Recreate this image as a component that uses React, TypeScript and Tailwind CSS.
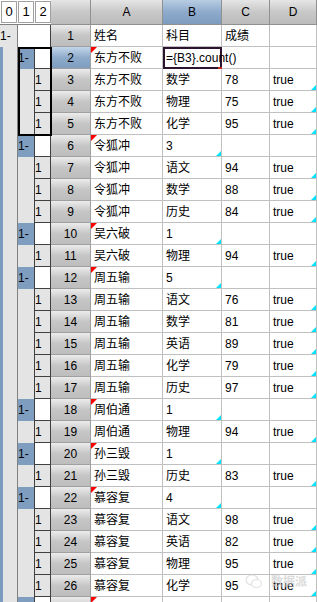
type Row = {
  n: number;
  a: string;
  b: string;
  c: string;
  d: string;
  head?: boolean;
};

const rows: Row[] = [
  { n: 1, a: '姓名', b: '科目', c: '成绩', d: '' },
  { n: 2, a: '东方不败', b: '={B3}.count()', c: '', d: '', head: true },
  { n: 3, a: '东方不败', b: '数学', c: '78', d: 'true' },
  { n: 4, a: '东方不败', b: '物理', c: '75', d: 'true' },
  { n: 5, a: '东方不败', b: '化学', c: '95', d: 'true' },
  { n: 6, a: '令狐冲', b: '3', c: '', d: '', head: true },
  { n: 7, a: '令狐冲', b: '语文', c: '94', d: 'true' },
  { n: 8, a: '令狐冲', b: '数学', c: '88', d: 'true' },
  { n: 9, a: '令狐冲', b: '历史', c: '84', d: 'true' },
  { n: 10, a: '吴六破', b: '1', c: '', d: '', head: true },
  { n: 11, a: '吴六破', b: '物理', c: '94', d: 'true' },
  { n: 12, a: '周五输', b: '5', c: '', d: '', head: true },
  { n: 13, a: '周五输', b: '语文', c: '76', d: 'true' },
  { n: 14, a: '周五输', b: '数学', c: '81', d: 'true' },
  { n: 15, a: '周五输', b: '英语', c: '89', d: 'true' },
  { n: 16, a: '周五输', b: '化学', c: '79', d: 'true' },
  { n: 17, a: '周五输', b: '历史', c: '97', d: 'true' },
  { n: 18, a: '周伯通', b: '1', c: '', d: '', head: true },
  { n: 19, a: '周伯通', b: '物理', c: '94', d: 'true' },
  { n: 20, a: '孙三毁', b: '1', c: '', d: '', head: true },
  { n: 21, a: '孙三毁', b: '历史', c: '83', d: 'true' },
  { n: 22, a: '慕容复', b: '4', c: '', d: '', head: true },
  { n: 23, a: '慕容复', b: '语文', c: '98', d: 'true' },
  { n: 24, a: '慕容复', b: '英语', c: '82', d: 'true' },
  { n: 25, a: '慕容复', b: '物理', c: '95', d: 'true' },
  { n: 26, a: '慕容复', b: '化学', c: '95', d: 'true' },
];

const font = { fontFamily: '"Liberation Sans", "Noto Sans CJK SC", sans-serif' };

const RedMark = () => (
  <div className="absolute left-0 top-0 w-0 h-0 border-t-[6px] border-t-[#ff0000] border-r-[6px] border-r-transparent" />
);

const CyanMark = () => (
  <div className="absolute right-0 bottom-0 w-0 h-0 border-b-[5px] border-b-[#00e5ff] border-l-[5px] border-l-transparent" />
);

const Cell = ({ w, children, red, cyan }: { w: string; children?: React.ReactNode; red?: boolean; cyan?: boolean }) => (
  <div className={`relative ${w} shrink-0 h-full border-r border-b border-[#c0c0c0] bg-white flex items-center pl-[3px] text-[12px] text-black whitespace-nowrap`}>
    {red && <RedMark />}
    {children}
    {cyan && <CyanMark />}
  </div>
);

export default function App() {
  return (
    <div className="relative w-[317px] h-[602px] overflow-hidden bg-white select-none" style={font}>
      {/* header */}
      <div className="flex h-[25px]">
        <div className="w-[51px] shrink-0 flex items-start gap-[1px] pl-[1px] pt-[1px] bg-white border-b border-[#808080]">
          {['0', '1', '2'].map((l) => (
            <div key={l} className="w-[16px] h-[22px] border border-[#a0a0a0] bg-white flex items-center justify-center text-[13px]">
              {l}
            </div>
          ))}
        </div>
        <div className="w-[40px] shrink-0 border-r border-b border-[#909090] bg-gradient-to-b from-[#e6e6e6] via-[#c8c8c8] to-[#bcbcbc]" />
        {['A', 'B', 'C', 'D'].map((c, i) => (
          <div
            key={c}
            className={`${['w-[72px]', 'w-[59px]', 'w-[48px]', 'w-[47px]'][i]} shrink-0 border-r border-b border-[#909090] flex items-center justify-center text-[12px] ${
              c === 'B'
                ? 'bg-gradient-to-b from-[#b8cde3] via-[#8eaacb] to-[#7d9cbe]'
                : 'bg-gradient-to-b from-[#e6e6e6] via-[#c8c8c8] to-[#bcbcbc]'
            }`}
          >
            {c}
          </div>
        ))}
      </div>

      {rows.map((r) => {
        const first = r.n === 1;
        return (
          <div key={r.n} className="flex h-[22px]">
            {first ? (
              <>
                <div className="w-[18px] shrink-0 bg-[#e4e4e4] border-r border-[#808080] text-[12px] flex items-center">1-</div>
                <div className="w-[33px] shrink-0 bg-white border-r border-[#404040]" />
              </>
            ) : (
              <>
                <div className="w-[18px] shrink-0 bg-[#e4e4e4] border-l-[3px] border-l-[#7b9cc0] border-r border-r-[#808080]" />
                <div className={`w-[16px] shrink-0 text-[12px] flex items-center ${r.head ? 'bg-[#7f9ebf]' : 'bg-[#e4e4e4]'}`}>
                  {r.head ? '1-' : ''}
                </div>
                <div
                  className={`w-[17px] shrink-0 border-l border-b border-r border-[#404040] text-[12px] flex items-center ${
                    r.head ? 'bg-white' : 'bg-[#e4e4e4]'
                  }`}
                >
                  {r.head ? '' : '1'}
                </div>
              </>
            )}
            <div
              className={`w-[40px] shrink-0 h-full border-r border-b border-[#a0a0a0] flex items-center justify-center text-[12px] ${
                r.n === 2
                  ? 'bg-gradient-to-b from-[#c2d6ea] via-[#8fabcb] to-[#7e9dbf]'
                  : 'bg-gradient-to-b from-[#ececec] via-[#c6c6c6] to-[#bdbdbd]'
              }`}
            >
              {r.n}
            </div>
            <Cell w="w-[72px]" red={r.head}>
              {r.a}
            </Cell>
            {r.n === 2 ? (
              <div className="relative w-[59px] shrink-0 h-full border-2 border-[#2c1430] bg-white flex items-center pl-[1px] text-[12px] whitespace-nowrap z-10">
                {r.b}
                <div className="absolute -right-[2px] -bottom-[2px] w-[4px] h-[2px] bg-[#c03020]" />
              </div>
            ) : (
              <Cell w="w-[59px]" cyan={r.head}>
                {r.b}
              </Cell>
            )}
            <Cell w="w-[48px]">{r.c}</Cell>
            <Cell w="w-[47px]" cyan={!r.head && !first}>
              {r.d}
            </Cell>
          </div>
        );
      })}

      {/* next group, cut by the window edge */}
      <div className="flex h-[22px]">
        <div className="w-[18px] shrink-0 bg-[#e4e4e4] border-l-[3px] border-l-[#7b9cc0] border-r border-r-[#808080]" />
        <div className="w-[16px] shrink-0 bg-[#7f9ebf]" />
        <div className="w-[17px] shrink-0 border-l border-r border-[#404040] bg-white" />
        <div className="w-[40px] shrink-0 border-r border-[#a0a0a0] bg-gradient-to-b from-[#ececec] via-[#c6c6c6] to-[#bdbdbd]" />
        <div className="relative w-[72px] shrink-0 border-r border-[#c0c0c0] bg-white">
          <RedMark />
        </div>
        <div className="w-[59px] shrink-0 border-r border-[#c0c0c0]" />
        <div className="w-[48px] shrink-0 border-r border-[#c0c0c0]" />
        <div className="w-[47px] shrink-0 border-r border-[#c0c0c0]" />
      </div>

      {/* selected outline group */}
      <div className="pointer-events-none absolute left-[18px] top-[47px] w-[34px] h-[89px] border-2 border-black" />

      {/* watermark */}
      <div className="pointer-events-none absolute left-[245px] top-[574px] flex items-center gap-[8px] opacity-60 whitespace-nowrap">
        <svg width="18" height="15" viewBox="0 0 18 15">
          <ellipse cx="7" cy="6" rx="6" ry="5" fill="none" stroke="#d0d0d0" strokeWidth="1.2" />
          <ellipse cx="11.5" cy="9.5" rx="5" ry="4" fill="white" stroke="#d0d0d0" strokeWidth="1.2" />
        </svg>
        <span className="text-[12px] leading-none text-[#c4c4c4] font-bold">数据派</span>
      </div>
    </div>
  );
}
